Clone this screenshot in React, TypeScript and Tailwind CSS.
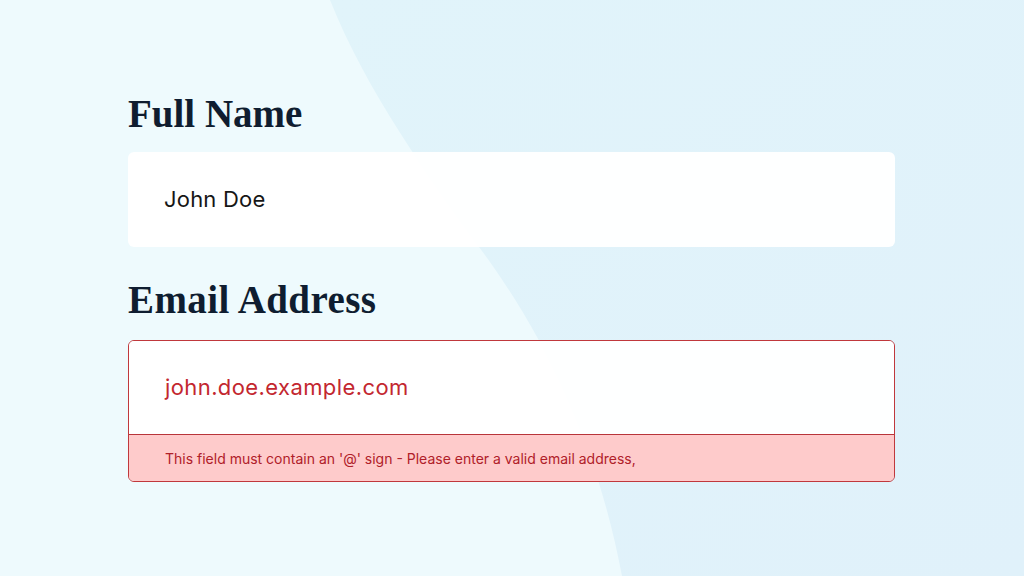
export default function App() {
  return (
    <div className="relative h-[576px] w-full overflow-hidden bg-[#eefafd]">
      {/* background wave */}
      <svg className="absolute inset-0" width="1024" height="576" viewBox="0 0 1024 576">
        <defs>
          <linearGradient id="wave" x1="0" y1="0" x2="1" y2="1">
            <stop offset="0" stopColor="#e1f4fa" />
            <stop offset="1" stopColor="#e0f1fa" />
          </linearGradient>
        </defs>
        <path d="M330,0 C368,95 432,182 490,262 C552,350 598,450 622,576 L1024,576 L1024,0 Z" fill="url(#wave)" />
      </svg>

      <div className="relative flex w-[767px] flex-col pl-[128px] pt-[91px] box-content">
        <h1 className="mb-[16px] text-[39px] leading-[45px] font-bold text-[#0f1d30] [font-family:'Liberation_Serif',serif]">
          Full Name
        </h1>
        <div className="flex h-[95px] items-center rounded-md bg-white/95 px-9">
          <span className="text-[22px] tracking-[0.2px] text-[#161616] [font-family:Inter,sans-serif]">John Doe</span>
        </div>

        <h2 className="mt-[30px] mb-[18px] text-[39px] leading-[45px] font-bold tracking-[0.4px] text-[#0f1d30] [font-family:'Liberation_Serif',serif]">
          Email Address
        </h2>
        <div className="flex flex-col overflow-hidden rounded-md border border-[#c0383c] [font-family:Inter,sans-serif]">
          <div className="flex h-[94px] items-center border-b border-[#b8353a] bg-white/95 px-9">
            <span className="text-[22px] tracking-[0.4px] text-[#c3272f]">john.doe.example.com</span>
          </div>
          <div className="flex h-[46px] items-center bg-[#fecbcb] px-9">
            <span className="text-[14px] text-[#b02029]">
              This field must contain an '@' sign - Please enter a valid email address,
            </span>
          </div>
        </div>
      </div>
    </div>
  );
}
